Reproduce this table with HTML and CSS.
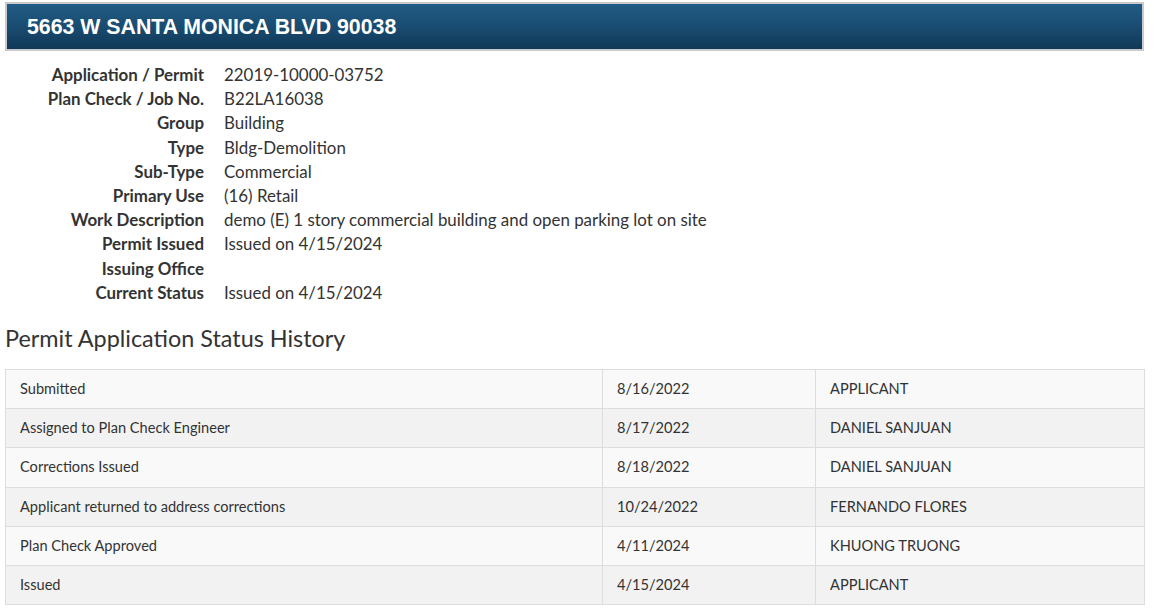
FILE: index.html
```html
<!DOCTYPE html>
<html>
<head>
<meta charset="utf-8">
<link rel="stylesheet" href="styles.css">
</head>
<body>
<div class="page">
  <div class="title-bar"><h1>5663 W SANTA MONICA BLVD 90038</h1></div>
  <dl class="details">
    <dt>Application / Permit</dt><dd>22019-10000-03752</dd>
    <dt>Plan Check / Job No.</dt><dd>B22LA16038</dd>
    <dt>Group</dt><dd>Building</dd>
    <dt>Type</dt><dd>Bldg-Demolition</dd>
    <dt>Sub-Type</dt><dd>Commercial</dd>
    <dt>Primary Use</dt><dd>(16) Retail</dd>
    <dt>Work Description</dt><dd>demo (E) 1 story commercial building and open parking lot on site</dd>
    <dt>Permit Issued</dt><dd>Issued on 4/15/2024</dd>
    <dt>Issuing Office</dt><dd></dd>
    <dt>Current Status</dt><dd>Issued on 4/15/2024</dd>
  </dl>
  <h2 class="section-title">Permit Application Status History</h2>
  <table class="history">
    <colgroup><col class="c1"><col class="c2"><col class="c3"></colgroup>
    <tbody>
      <tr><td>Submitted</td><td>8/16/2022</td><td>APPLICANT</td></tr>
      <tr><td>Assigned to Plan Check Engineer</td><td>8/17/2022</td><td>DANIEL SANJUAN</td></tr>
      <tr><td>Corrections Issued</td><td>8/18/2022</td><td>DANIEL SANJUAN</td></tr>
      <tr><td>Applicant returned to address corrections</td><td>10/24/2022</td><td>FERNANDO FLORES</td></tr>
      <tr><td>Plan Check Approved</td><td>4/11/2024</td><td>KHUONG TRUONG</td></tr>
      <tr><td>Issued</td><td>4/15/2024</td><td>APPLICANT</td></tr>
    </tbody>
  </table>
</div>
</body>
</html>
```

FILE: styles.css
```css
html, body {
  margin: 0;
  padding: 0;
  background: #fff;
}
body {
  font-family: Lato, "Open Sans", sans-serif;
  color: #333;
}
.page {
  width: 1139px;
  margin: 0 0 0 5px;
  padding-top: 2px;
}
.title-bar {
  border: 2px solid #c9c9ce;
  background: linear-gradient(to bottom, #215b85 0%, #1a4c71 50%, #103856 100%);
  height: 45px;
  display: flex;
  align-items: center;
  padding-left: 20px;
}
.title-bar h1 {
  margin: 0;
  font-family: "Liberation Sans", Arial, sans-serif;
  font-weight: bold;
  font-size: 21.3px;
  color: #fff;
  padding-top: 1px;
}
.details {
  display: grid;
  grid-template-columns: 199px 1fr;
  column-gap: 20px;
  margin: 12px 0 0 0;
  font-size: 16.9px;
  line-height: 24.2px;
}
.details dt {
  text-align: right;
  font-weight: bold;
  color: #333;
}
.details dd {
  margin: 0;
  color: #333;
}
.section-title {
  margin: 18px 0 16px 0;
  font-weight: normal;
  font-size: 23.4px;
  line-height: 30px;
  color: #333;
}
.history {
  width: 1139px;
  border-collapse: collapse;
  table-layout: fixed;
  font-size: 14.6px;
}
.history col.c1 { width: 597px; }
.history col.c2 { width: 213px; }
.history col.c3 { width: 329px; }
.history td {
  border: 1px solid #ddd;
  padding: 9px 14px;
  line-height: 20.2px;
  height: 20.2px;
  color: #333;
}
.history tr:nth-child(odd) td { background: #f9f9f9; }
.history tr:nth-child(even) td { background: #f2f2f2; }
```
